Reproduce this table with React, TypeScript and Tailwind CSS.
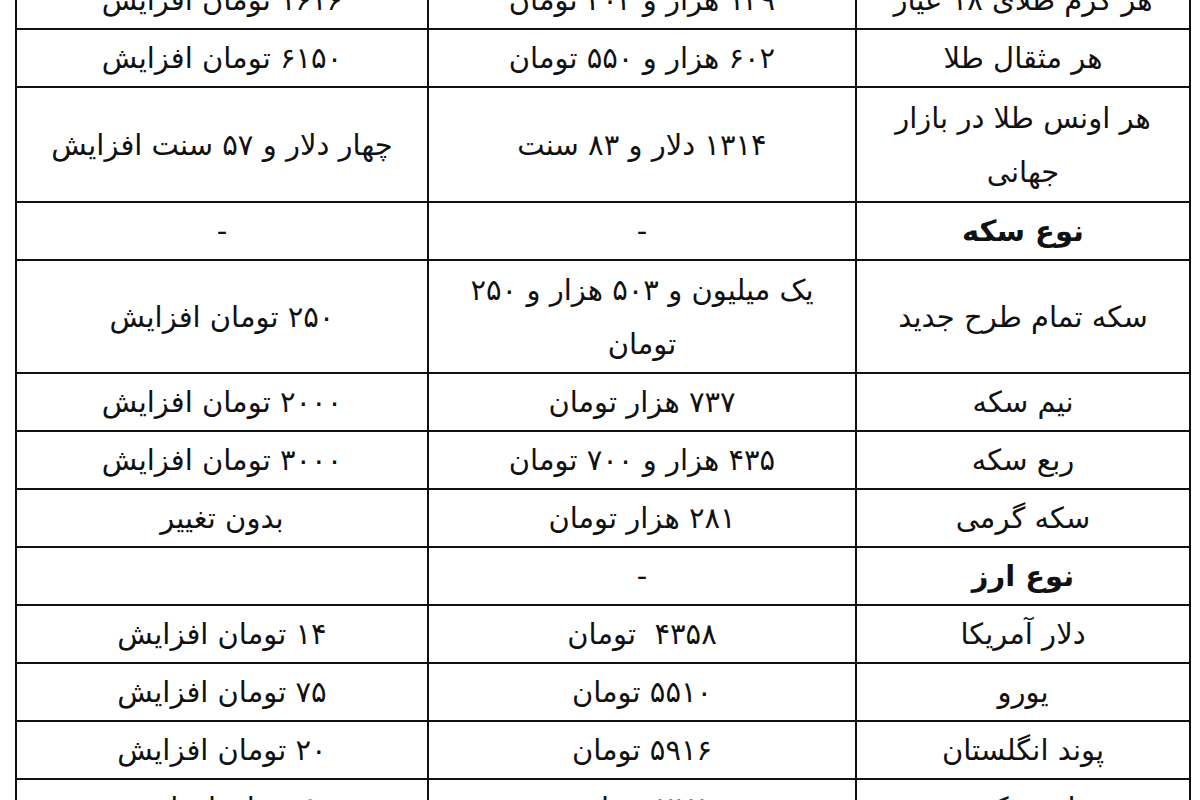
import React from "react";

type Row = {
  label: React.ReactNode;
  price: React.ReactNode;
  change: React.ReactNode;
  heading?: boolean;
  h?: string;
};

const rows: Row[] = [
  { label: "هر گرم طلای ۱۸ عیار", price: "۱۲۹ هزار و ۲۰۲ تومان", change: "۱۶۱۶ تومان افزایش" },
  { label: "هر مثقال طلا", price: "۶۰۲ هزار و ۵۵۰ تومان", change: "۶۱۵۰ تومان افزایش" },
  {
    label: (
      <>
        هر اونس طلا در بازار
        <br />
        جهانی
      </>
    ),
    price: "۱۳۱۴ دلار و ۸۳ سنت",
    change: "چهار دلار و ۵۷ سنت افزایش",
    h: "h-[115px]",
  },
  { label: "نوع سکه", price: "-", change: "-", heading: true },
  {
    label: "سکه تمام طرح جدید",
    price: (
      <>
        یک میلیون و ۵۰۳ هزار و ۲۵۰
        <br />
        تومان
      </>
    ),
    change: "۲۵۰ تومان افزایش",
    h: "h-[113px]",
  },
  { label: "نیم سکه", price: "۷۳۷ هزار تومان", change: "۲۰۰۰ تومان افزایش" },
  { label: "ربع سکه", price: "۴۳۵ هزار و ۷۰۰ تومان", change: "۳۰۰۰ تومان افزایش" },
  { label: "سکه گرمی", price: "۲۸۱ هزار تومان", change: "بدون تغییر" },
  { label: "نوع ارز", price: "-", change: "", heading: true },
  { label: "دلار آمریکا", price: "۴۳۵۸\u00a0 تومان", change: "۱۴ تومان افزایش" },
  { label: "یورو", price: "۵۵۱۰ تومان", change: "۷۵ تومان افزایش" },
  { label: "پوند انگلستان", price: "۵۹۱۶ تومان", change: "۲۰ تومان افزایش" },
  { label: "لیر ترکیه", price: "۷۱۷ تومان", change: "۹ تومان افزایش" },
];

const cell = "border-2 border-[#111] text-center align-middle px-2 py-0 leading-[54px]";

export default function App() {
  return (
    <div className="w-[1200px] h-[800px] overflow-hidden bg-white">
      <table
        dir="rtl"
        className="ml-[15px] -mt-[30px] w-[1174px] border-collapse table-fixed text-[29px] text-[#111]"
        style={{ fontFamily: '"DejaVu Sans", Tahoma, sans-serif' }}
      >
        <colgroup>
          <col className="w-[334px]" />
          <col className="w-[428px]" />
          <col className="w-[412px]" />
        </colgroup>
        <tbody>
          {rows.map((r, i) => (
            <tr key={i} className={r.h ?? "h-[58px]"}>
              <td className={`${cell} ${r.heading ? "font-bold" : ""}`}>{r.label}</td>
              <td className={`${cell} whitespace-pre-wrap`}>{r.price}</td>
              <td className={cell}>{r.change}</td>
            </tr>
          ))}
        </tbody>
      </table>
    </div>
  );
}
